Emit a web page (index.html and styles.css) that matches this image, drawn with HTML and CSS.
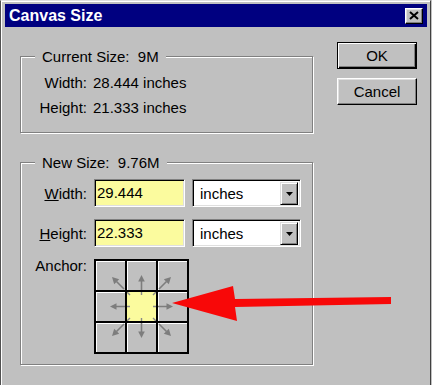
FILE: index.html
```html
<!DOCTYPE html>
<html>
<head>
<meta charset="utf-8">
<title>Canvas Size</title>
<link rel="stylesheet" href="styles.css">
</head>
<body>
<svg class="defs" width="0" height="0" aria-hidden="true">
  <symbol id="straight" viewBox="0 0 29 29">
    <path d="M14.5 29V19" stroke="#7d7d7d" stroke-width="1.6" fill="none"/>
    <path d="M14.5 14L11.2 20.5H17.8Z" fill="#7d7d7d"/>
  </symbol>
  <symbol id="diag" viewBox="0 0 29 29">
    <path d="M28 28L20.5 20.5" stroke="#7d7d7d" stroke-width="1.6" fill="none"/>
    <path d="M16 16L23.2 18.2L18.2 23.2Z" fill="#7d7d7d"/>
  </symbol>
</svg>
<div class="window">
  <div class="titlebar">
    <span class="title">Canvas Size</span>
    <button class="close" aria-label="Close">
      <svg width="10" height="9" viewBox="0 0 10 9"><path d="M1 1L9 8M9 1L1 8" stroke="#000" stroke-width="2"/></svg>
    </button>
  </div>
  <div class="body">
    <div class="main">
      <fieldset class="group current">
        <legend>Current Size:&nbsp; 9M</legend>
        <div class="info">
          <span class="lbl">Width:</span><span>28.444 inches</span>
          <span class="lbl">Height:</span><span>21.333 inches</span>
        </div>
      </fieldset>
      <fieldset class="group new">
        <legend>New Size:&nbsp; 9.76M</legend>
        <div class="form">
          <label class="lbl"><u>W</u>idth:</label>
          <div class="field">29.444</div>
          <div class="combo"><span class="combo-text">inches</span><span class="drop"><svg width="7" height="4" viewBox="0 0 7 4"><path d="M0 0H7L3.5 4Z" fill="#000"/></svg></span></div>

          <label class="lbl"><u>H</u>eight:</label>
          <div class="field">22.333</div>
          <div class="combo"><span class="combo-text">inches</span><span class="drop"><svg width="7" height="4" viewBox="0 0 7 4"><path d="M0 0H7L3.5 4Z" fill="#000"/></svg></span></div>

          <span class="lbl anchor-lbl">Anchor:</span>
          <div class="anchor">
            <div class="cell"><svg width="29" height="29"><use href="#diag"/></svg></div>
            <div class="cell"><svg width="29" height="29"><use href="#straight"/></svg></div>
            <div class="cell"><svg width="29" height="29"><g transform="rotate(90 14.5 14.5)"><use href="#diag"/></g></svg></div>
            <div class="cell"><svg width="29" height="29"><g transform="rotate(270 14.5 14.5)"><use href="#straight"/></g></svg></div>
            <div class="cell center"><svg width="29" height="29"><path d="M14.5 0V3M14.5 26V29M0 14.5H3M26 14.5H29M0 0L3 3M29 0L26 3M0 29L3 26M29 29L26 26" stroke="#8a8a8a" stroke-width="1.4" fill="none"/></svg></div>
            <div class="cell"><svg width="29" height="29"><g transform="rotate(90 14.5 14.5)"><use href="#straight"/></g></svg></div>
            <div class="cell"><svg width="29" height="29"><g transform="rotate(270 14.5 14.5)"><use href="#diag"/></g></svg></div>
            <div class="cell"><svg width="29" height="29"><g transform="rotate(180 14.5 14.5)"><use href="#straight"/></g></svg></div>
            <div class="cell"><svg width="29" height="29"><g transform="rotate(180 14.5 14.5)"><use href="#diag"/></g></svg></div>
          </div>
        </div>
      </fieldset>
    </div>
    <div class="buttons">
      <button class="btn default">OK</button>
      <button class="btn">Cancel</button>
    </div>
  </div>
  <svg class="pointer" width="432" height="385" viewBox="0 0 432 385" aria-hidden="true">
    <polygon points="172,303 233,286 235,299 391,297 391,304 235,307 237,321" fill="#f80808"/>
  </svg>
</div>
</body>
</html>
```

FILE: styles.css
```css
* {
  box-sizing: border-box;
}

body {
  margin: 0;
  background: #c0c0c0;
  font-family: "Liberation Sans", Arial, sans-serif;
  font-size: 15px;
  color: #000;
}

.defs {
  display: block;
  width: 0;
  height: 0;
}

.window {
  position: relative;
  width: 431px;
  height: 385px;
  border-top: 1px solid #dfdfdf;
  border-left: 1px solid #505050;
  border-right: 1px solid #404040;
  box-shadow: inset 1px 1px 0 #fff;
  padding: 3px 3px 0 4px;
  display: flex;
  flex-direction: column;
  overflow: hidden;
}

.titlebar {
  height: 23px;
  background: #000080;
  display: flex;
  align-items: center;
  justify-content: space-between;
  padding: 0 4px 0 4px;
  flex-shrink: 0;
}

.title {
  color: #fff;
  font-weight: bold;
  font-size: 16px;
  line-height: 20px;
}

.close {
  width: 18px;
  height: 16px;
  padding: 0;
  background: #c0c0c0;
  border: 1px solid;
  border-color: #fff #000 #000 #fff;
  box-shadow: inset -1px -1px 0 #808080, inset 1px 1px 0 #dfdfdf;
  display: flex;
  align-items: center;
  justify-content: center;
}

.close svg {
  display: block;
}

.body {
  display: flex;
  padding: 0 10px 0 15px;
}

.main {
  width: 293px;
  margin-top: 21px;
  display: flex;
  flex-direction: column;
}

.group {
  margin: 0;
  min-width: 0;
  border: 1px solid #808080;
  box-shadow: inset 1px 1px 0 #fff, 1px 1px 0 #fff;
}

.group legend {
  margin-left: 14px;
  padding: 0 7px;
  line-height: 17px;
  background: #c0c0c0;
}

.current {
  padding: 8px 0 14px 0;
}

.new {
  margin-top: 21px;
  padding: 8px 0 10px 0;
}

.info {
  display: grid;
  grid-template-columns: 66px auto;
  column-gap: 6px;
  row-gap: 5px;
  line-height: 20px;
}

.lbl {
  text-align: right;
}

.form {
  display: grid;
  grid-template-columns: 66px 91px 109px;
  grid-template-rows: 28px 28px auto;
  column-gap: 7px;
  row-gap: 12px;
  align-items: center;
}

.field {
  height: 28px;
  background: #fbfb9e;
  border: 1px solid;
  border-color: #808080 #fff #fff #808080;
  box-shadow: inset 1px 1px 0 #000, inset -1px -1px 0 #dfdfdf;
  padding-left: 2px;
  line-height: 26px;
}

.combo {
  height: 28px;
  display: flex;
  background: #fff;
  border: 1px solid;
  border-color: #808080 #fff #fff #808080;
  box-shadow: inset 1px 1px 0 #000, inset -1px -1px 0 #dfdfdf;
  padding: 2px 2px 1px 2px;
}

.combo-text {
  flex: 1;
  padding-left: 5px;
  line-height: 23px;
}

.drop {
  width: 18px;
  background: #c0c0c0;
  border: 1px solid;
  border-color: #dfdfdf #000 #000 #dfdfdf;
  box-shadow: inset 1px 1px 0 #fff, inset -1px -1px 0 #808080;
  display: flex;
  align-items: center;
  justify-content: center;
}

.drop svg {
  display: block;
}

.anchor-lbl {
  align-self: start;
  line-height: 17px;
  margin-top: -2px;
}

.anchor {
  grid-column: span 2;
  justify-self: start;
  display: grid;
  grid-template-columns: repeat(3, 29px);
  grid-auto-rows: 29px;
  gap: 2px;
  padding: 2px;
  background: #000;
}

.cell {
  background: #c0c0c0;
  box-shadow: inset 1px 1px 0 #fff;
}

.cell svg {
  display: block;
}

.cell.center {
  background: #fbfb9e;
  box-shadow: none;
}

.buttons {
  width: 80px;
  margin-left: 24px;
  padding-top: 15px;
  display: flex;
  flex-direction: column;
  gap: 9px;
}

.btn {
  height: 27px;
  width: 80px;
  padding: 0;
  font-family: "Liberation Sans", Arial, sans-serif;
  font-size: 15px;
  color: #000;
  background: #c0c0c0;
  border: 1px solid;
  border-color: #fff #000 #000 #fff;
  box-shadow: inset -1px -1px 0 #808080, inset 1px 1px 0 #dfdfdf;
}

.btn.default {
  border-color: #000;
  box-shadow: inset 1px 1px 0 #fff, inset -1px -1px 0 #000, inset -2px -2px 0 #808080;
}

.pointer {
  position: absolute;
  left: -1px;
  top: -1px;
  pointer-events: none;
}
```
